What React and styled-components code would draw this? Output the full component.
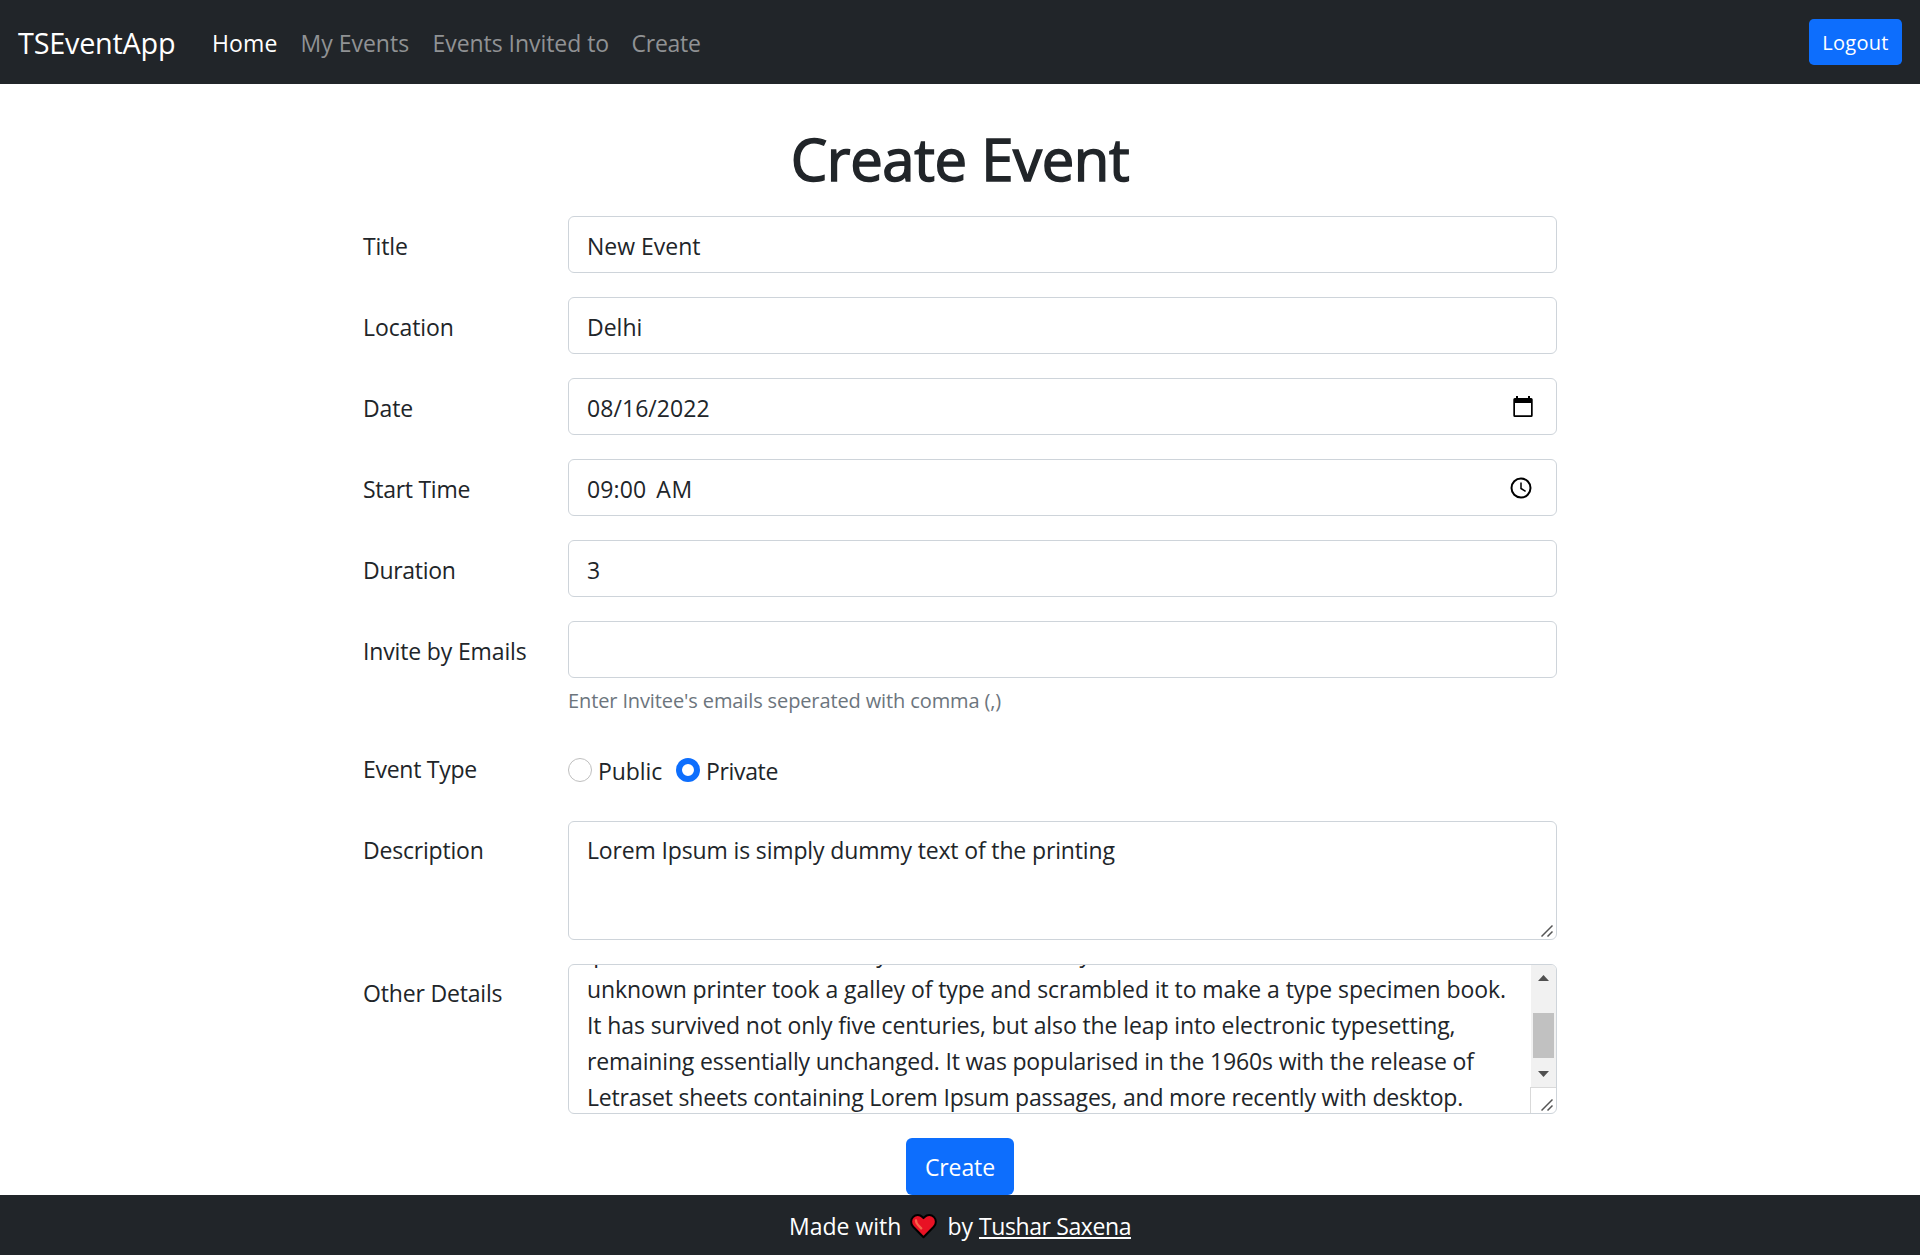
import React from "react";
import styled, { createGlobalStyle } from "styled-components";

const Global = createGlobalStyle`
  * { box-sizing: border-box; }
  body { margin: 0; background: #fff; color: #212529; font: 400 23px/36px "Open Sans", "Noto Sans", sans-serif; }
`;

const Page = styled.div`
  display: flex;
  flex-direction: column;
  height: 1255px;
  overflow: hidden;
`;
const T = styled.span`
  white-space: nowrap;
  letter-spacing: ${(p) => p.$ls || 0}px;
`;
const Navbar = styled.nav`
  display: flex;
  align-items: flex-start;
  height: 84px;
  padding: 19px 18px 0;
  background: #212529;
`;
const Brand = styled.a`
  width: 157px;
  margin-right: 37px;
  font-size: 28.8px;
  line-height: 48px;
  color: #fff;
`;
const NavLink = styled.a`
  width: ${(p) => p.$w}px;
  line-height: 48px;
  color: ${(p) => (p.$active ? "#fff" : "#909294")};
`;
const Button = styled.button`
  width: ${(p) => (p.$small ? 93 : 108)}px;
  height: ${(p) => (p.$small ? 46 : 57)}px;
  margin-left: ${(p) => (p.$small ? "auto" : 0)};
  padding: 1px 0 0;
  border: 0;
  border-radius: ${(p) => (p.$small ? 4.8 : 6)}px;
  background: #0d6efd;
  color: #fff;
  font-family: inherit;
  font-size: ${(p) => (p.$small ? 20 : 23)}px;
  line-height: 36px;
`;
const Main = styled.main`
  display: flex;
  flex-direction: column;
  align-items: center;
  height: 1111px;
  padding-top: 39px;
`;
const Heading = styled.h1`
  margin: 0 0 21px;
  font-size: 58px;
  line-height: 72px;
  font-weight: 400;
  -webkit-text-stroke: 1.5px #212529;
`;
const Form = styled.form`
  display: flex;
  flex-direction: column;
  align-items: center;
  gap: 24px;
  width: 1194px;
`;
const Row = styled.div`
  display: flex;
  align-items: flex-start;
  width: 100%;
  height: ${(p) => p.$h || 57}px;
`;
const Label = styled.label`
  width: 205px;
  padding-top: ${(p) => p.$top || 12}px;
`;
const Field = styled.div`
  display: flex;
  flex-direction: column;
  width: 989px;
`;
const Control = styled.div`
  position: relative;
  display: flex;
  justify-content: space-between;
  height: ${(p) => p.$h || 57}px;
  padding: ${(p) => (p.$area ? 10 : 11)}px 18px;
  border: 1px solid #ced4da;
  border-radius: 6px;
`;
const PickerIcon = styled.svg`
  flex: none;
  width: 24px;
  height: 24px;
  margin: ${(p) => p.$top}px ${(p) => p.$right}px 0 0;
`;
const Time = styled.div`
  display: flex;
  gap: 10px;
`;
const Help = styled.small`
  margin-top: 7px;
  font-size: 20px;
  line-height: 32px;
  color: #6c757d;
`;
const Choices = styled.div`
  display: flex;
  padding-top: 15px;
`;
const Choice = styled.div`
  display: flex;
  width: 108px;
`;
const Radio = styled.span`
  width: 24px;
  height: 24px;
  margin: 5px 6px 0 0;
  border: ${(p) => (p.$on ? "6.5px solid #0d6efd" : "1px solid #bfbfbf")};
  border-radius: 50%;
`;
const Grip = styled.svg`
  position: absolute;
  right: 3px;
  bottom: 2px;
  width: 12px;
  height: 13px;
`;
const ScrollArea = styled.div`
  position: relative;
  display: flex;
  justify-content: space-between;
  height: 150px;
  border: 1px solid #ced4da;
  border-radius: 6px;
  overflow: hidden;
`;
const Lines = styled.div`
  display: flex;
  flex-direction: column;
  margin: -30px 0 0 18px;
`;
const Scrollbar = styled.div`
  display: flex;
  flex-direction: column;
  align-items: flex-end;
  width: 26px;
`;
const Track = styled.div`
  display: flex;
  flex-direction: column;
  align-items: center;
  justify-content: space-between;
  width: 25px;
  height: 122px;
  padding: 10px 0;
  background: #f1f1f1;
`;
const Thumb = styled.div`
  width: 21px;
  height: 45px;
  margin-top: 19px;
  background: #c1c1c1;
`;
const Arrow = styled.svg`
  width: 11px;
  height: 6px;
`;
const Corner = styled.div`
  width: 26px;
  height: 26px;
  border-top: 1px solid #d9d9d9;
  border-left: 1px solid #d9d9d9;
`;
const Footer = styled.footer`
  display: flex;
  height: 60px;
  padding: 1px 0 0 789px;
  background: #212529;
  color: #fff;
  line-height: 60px;
`;
const Heart = styled.svg`
  width: 27px;
  height: 25px;
  margin: 18px 10px 0 9px;
`;
const Author = styled.a`
  margin-left: 6px;
  color: #fff;
  text-decoration: underline;
  text-decoration-thickness: 2px;
  text-underline-offset: 2px;
  text-decoration-skip-ink: none;
`;

const ResizeGrip = () => (
  <Grip viewBox="0 0 12 13" stroke="#555" strokeWidth="1.5" fill="none">
    <path d="M0.5 12.5L11.5 1.5M6.5 12.5L11.5 7.5" />
  </Grip>
);

const FieldRow = ({ label, ls, children, h, top }) => (
  <Row $h={h}>
    <Label $top={top}><T $ls={ls}>{label}</T></Label>
    <Field>{children}</Field>
  </Row>
);

export default function App() {
  return (
    <Page>
      <Global />
      <Navbar>
        <Brand><T $ls={-0.22}>TSEventApp</T></Brand>
        <NavLink $active $w={88.5}><T $ls={0.15}>Home</T></NavLink>
        <NavLink $w={132}><T>My Events</T></NavLink>
        <NavLink $w={199}><T $ls={-0.05}>Events Invited to</T></NavLink>
        <NavLink $w={70}><T $ls={-0.25}>Create</T></NavLink>
        <Button $small><T $ls={0.25}>Logout</T></Button>
      </Navbar>
      <Main>
        <Heading><T $ls={-0.4}>Create Event</T></Heading>
        <Form>
          <FieldRow label="Title" ls={-0.15}><Control><T>New Event</T></Control></FieldRow>
          <FieldRow label="Location" ls={-0.1}><Control><T>Delhi</T></Control></FieldRow>
          <FieldRow label="Date" ls={-0.1}>
            <Control>
              <T $ls={0.06}>08/16/2022</T>
              <PickerIcon $top={5} $right={3} viewBox="0 0 24 24">
                <path fill="#000" fillRule="evenodd" d="M5 1h2v2h10V1h2v2h1.2a1.5 1.5 0 0 1 1.5 1.5v16a1.5 1.5 0 0 1-1.5 1.5H3.8a1.5 1.5 0 0 1-1.5-1.5v-16A1.5 1.5 0 0 1 3.8 3H5zM4 8v12.3h16V8z" />
              </PickerIcon>
            </Control>
          </FieldRow>
          <FieldRow label="Start Time" ls={-0.28}>
            <Control>
              <Time><T $ls={0.1}>09:00</T><T $ls={0.8}>AM</T></Time>
              <PickerIcon $top={4.5} $right={5.5} viewBox="0 0 24 24" fill="none" stroke="#000">
                <circle cx="12" cy="12" r="9.5" strokeWidth="2" />
                <path d="M12 6.5v6l4.6 2.8" strokeWidth="1.5" />
              </PickerIcon>
            </Control>
          </FieldRow>
          <FieldRow label="Duration" ls={-0.28}><Control><T>3</T></Control></FieldRow>
          <FieldRow label="Invite by Emails" ls={-0.15} h={93}>
            <Control />
            <Help><T $ls={-0.12}>Enter Invitee's emails seperated with comma (,)</T></Help>
          </FieldRow>
          <FieldRow label="Event Type" ls={-0.28} h={59} top={13}>
            <Choices>
              <Choice><Radio /><T $ls={-0.1}>Public</T></Choice>
              <Choice><Radio $on /><T $ls={-0.35}>Private</T></Choice>
            </Choices>
          </FieldRow>
          <FieldRow label="Description" ls={-0.2} h={119} top={11}>
            <Control $h={119} $area>
              <T $ls={-0.145}>Lorem Ipsum is simply dummy text of the printing</T>
              <ResizeGrip />
            </Control>
          </FieldRow>
          <FieldRow label="Other Details" ls={-0.18} h={150} top={11}>
            <ScrollArea>
              <Lines>
                <T $ls={-0.2}>Ipsum has been the industry's standard dummy text ever since the 1500s, when an</T>
                <T $ls={-0.07}>unknown printer took a galley of type and scrambled it to make a type specimen book.</T>
                <T $ls={-0.11}>It has survived not only five centuries, but also the leap into electronic typesetting,</T>
                <T $ls={-0.17}>remaining essentially unchanged. It was popularised in the 1960s with the release of</T>
                <T $ls={-0.2}>Letraset sheets containing Lorem Ipsum passages, and more recently with desktop.</T>
              </Lines>
              <Scrollbar>
                <Track>
                  <Arrow viewBox="0 0 11 6"><path fill="#505050" d="M5.5 0L11 6H0z" /></Arrow>
                  <Thumb />
                  <Arrow viewBox="0 0 11 6"><path fill="#505050" d="M0 0h11L5.5 6z" /></Arrow>
                </Track>
                <Corner />
              </Scrollbar>
              <ResizeGrip />
            </ScrollArea>
          </FieldRow>
          <Button type="button"><T $ls={-0.1}>Create</T></Button>
        </Form>
      </Main>
      <Footer>
        <T>Made with</T>
        <Heart viewBox="0 0 27 25">
          <path fill="#e81224" stroke="#000" strokeWidth="2" strokeLinejoin="round" d="M13.5 23.2L3.2 12.8C.4 9.9.6 5.6 3 3.1 5.7.4 9.8.4 12.4 3l1.1 1.1L14.6 3c2.6-2.6 6.7-2.6 9.4.1 2.4 2.5 2.6 6.8-.2 9.7z" />
          <path fill="none" stroke="#f4664b" strokeWidth="2.4" strokeLinecap="round" d="M6 6.5c0 2 .8 3.3 2 4.500l3.200 3.300" />
        </Heart>
        <T>by</T>
        <Author><T $ls={-0.4}>Tushar Saxena</T></Author>
      </Footer>
    </Page>
  );
}
